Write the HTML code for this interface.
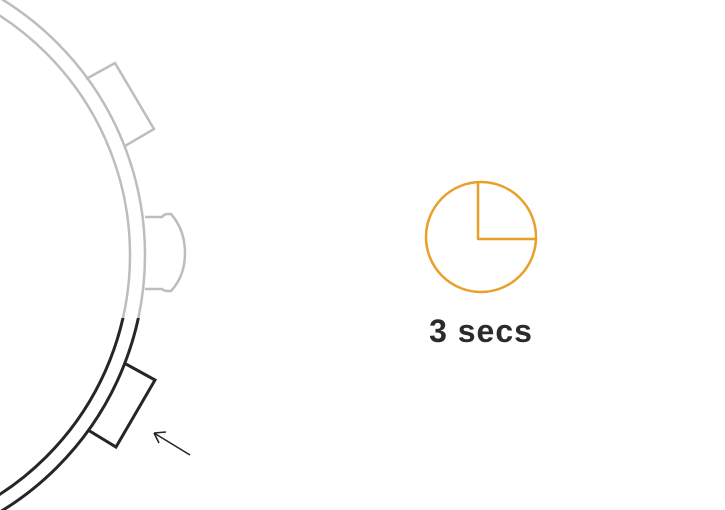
<!DOCTYPE html>
<html><head><style>
html,body{margin:0;padding:0;background:#fff;width:725px;height:510px;overflow:hidden;position:relative}
svg{position:absolute;left:0;top:0}
.t{position:absolute;left:381px;width:200px;text-align:center;top:312px;font:bold 32px/38px "Liberation Sans",sans-serif;color:#2b2b2b;letter-spacing:1px}
</style></head><body>
<svg width="725" height="510" viewBox="0 0 725 510">
<defs>
<clipPath id="top"><rect x="0" y="0" width="725" height="318"/></clipPath>
<clipPath id="bot"><rect x="0" y="318" width="725" height="192"/></clipPath>
</defs>
<g fill="none" stroke-width="2.5">
<g clip-path="url(#top)" stroke="#bdbdbd">
<circle cx="-155" cy="255" r="300"/>
<circle cx="-155" cy="255" r="285"/>
</g>
<g clip-path="url(#bot)" stroke="#262626" stroke-width="3">
<circle cx="-155" cy="255" r="300"/>
<circle cx="-155" cy="255" r="285"/>
</g>
<path d="M86 79 L115 63 L154 129 L125 146" stroke="#bdbdbd"/>
<path d="M145 217 L162 217 Q164 214 168 214 L171 214 Q185 230 185 253 Q185 276 171 291 L168 291 Q164 291 162 289 L145 289" stroke="#bdbdbd"/>
<path d="M124 363 L155 380 L116 447 L88 430" stroke="#262626" stroke-width="3"/>
<path d="M190 455 L154 433 M154 433 L166 432 M154 433 L159 443" stroke="#262626" stroke-width="1.6"/>
<circle cx="481" cy="237" r="55" stroke="#E9A02A" stroke-width="2.5"/>
<path d="M478 182 L478 239 L536 239" stroke="#E9A02A" stroke-width="2.5" stroke-linejoin="round"/>
</g>
</svg>
<div class="t">3 secs</div>
</body></html>
